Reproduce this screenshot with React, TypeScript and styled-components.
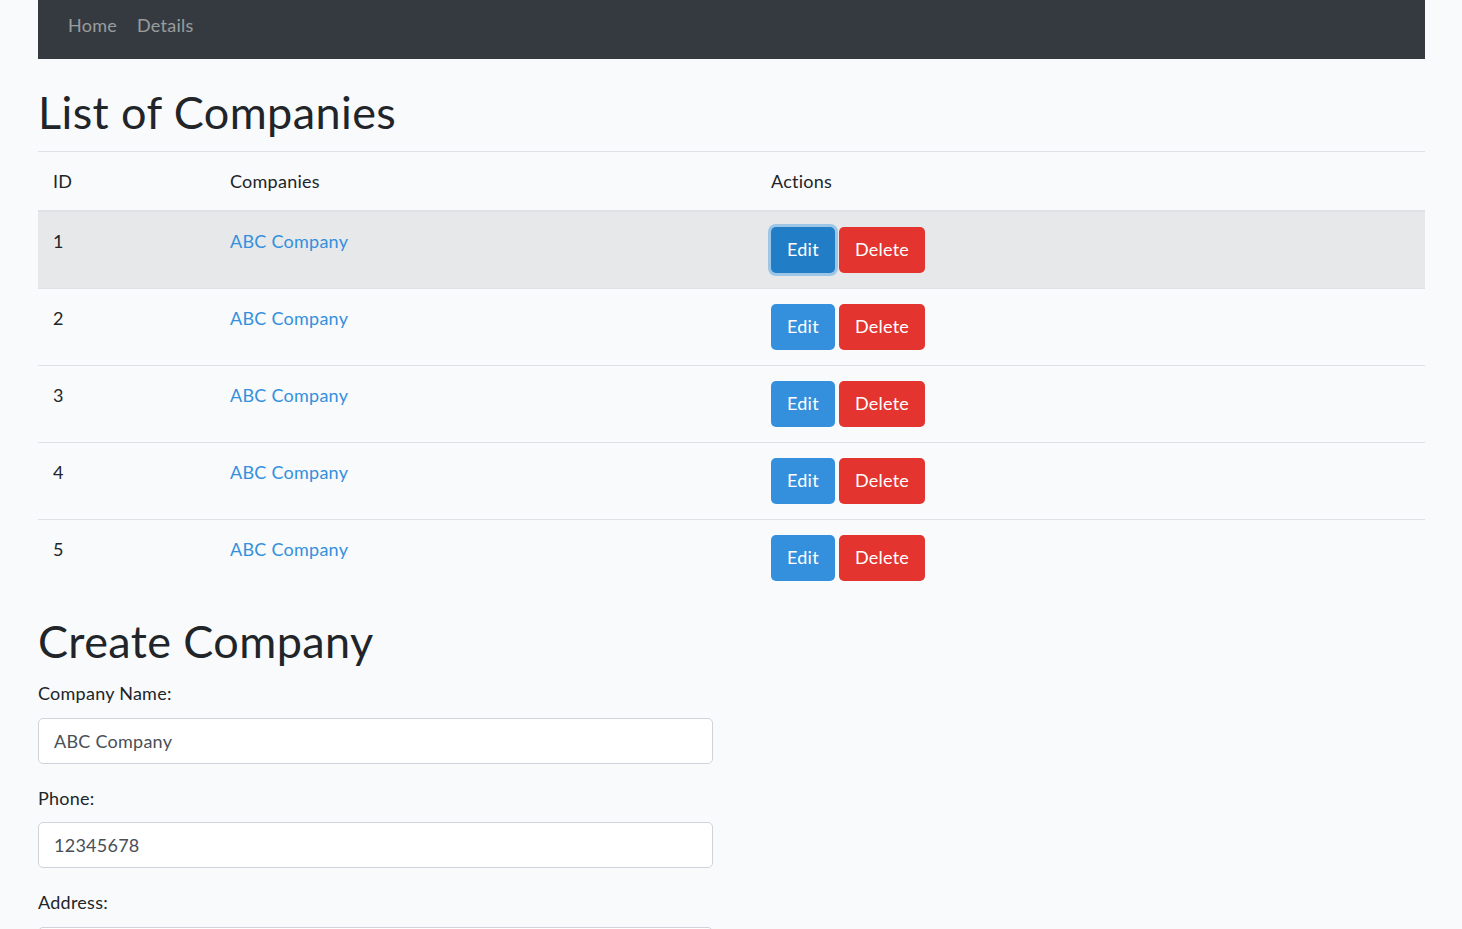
import React from 'react';
import styled, { createGlobalStyle } from 'styled-components';

const GlobalStyle = createGlobalStyle`
  * { box-sizing: border-box; }
  body {
    margin: 0;
    background: #f8fafc;
    color: #212529;
    font-family: Lato, "Noto Sans", sans-serif;
    font-size: 18px;
    line-height: 28.8px;
    letter-spacing: 0.25px;
  }
`;

const Page = styled.div`
  padding: 0 37px 0 38px;
`;

const Navbar = styled.nav`
  height: 59px;
  background: #343a40;
  display: flex;
  align-items: flex-start;
  padding: 11px 20px 0;
`;

const NavLink = styled.a`
  color: rgba(255, 255, 255, 0.5);
  text-decoration: none;
  font-size: 18px;
  padding: 0 10px;
  line-height: 28.8px;
`;

const Heading = styled.h1`
  font-size: 45px;
  font-weight: 400;
  line-height: 54px;
  letter-spacing: 0.4px;
  margin: ${p => (p.$first ? '26px' : '0')} 0 ${p => (p.$first ? '12px' : '11px')};
`;

const Table = styled.table`
  width: 100%;
  border-collapse: collapse;
  margin-bottom: 18px;
`;

const Th = styled.th`
  text-align: left;
  font-weight: 400;
  padding: 15px 15px 14px;
  border-top: 1px solid #dee2e6;
  border-bottom: 2px solid #dee2e6;
  vertical-align: bottom;
`;

const Row = styled.tr`
  background: ${p => (p.$hover ? '#e6e8ea' : 'transparent')};
`;

const Td = styled.td`
  padding: 15px;
  border-top: ${p => (p.$first ? 'none' : '1px solid #dee2e6')};
  vertical-align: top;
`;

const CompanyLink = styled.a`
  color: #3490dc;
  text-decoration: none;
`;

const Actions = styled.div`
  display: flex;
  gap: 4px;
`;

const Button = styled.button`
  font-family: inherit;
  font-size: 18px;
  letter-spacing: 0.25px;
  line-height: 28.8px;
  padding: 7.5px 15px;
  height: 46px;
  border: 1px solid transparent;
  border-radius: 5px;
  color: #fff;
  cursor: pointer;
  background: ${p => (p.$variant === 'danger' ? '#e3342f' : p.$active ? '#227dc7' : '#3490dc')};
  box-shadow: ${p => (p.$active ? '0 0 0 3px rgba(82, 161, 225, 0.5)' : 'none')};
`;

const FormGroup = styled.div`
  margin-bottom: 20px;
  width: 675px;
`;

const Label = styled.label`
  display: block;
  margin-bottom: 10px;
`;

const Input = styled.input`
  display: block;
  width: 100%;
  height: 46px;
  padding: 7.5px 15px;
  font-family: inherit;
  font-size: 18px;
  letter-spacing: 0.25px;
  color: #495057;
  background: #fff;
  border: 1px solid #ced4da;
  border-radius: 5px;
`;

const companies = [1, 2, 3, 4, 5].map(id => ({ id, name: 'ABC Company' }));

export default function App() {
  return (
    <>
      <GlobalStyle />
      <Page>
        <Navbar>
          <NavLink href="#">Home</NavLink>
          <NavLink href="#">Details</NavLink>
        </Navbar>

        <Heading $first>List of Companies</Heading>
        <Table>
          <colgroup>
            <col style={{ width: 177 }} />
            <col style={{ width: 541 }} />
            <col />
          </colgroup>
          <thead>
            <tr>
              <Th>ID</Th>
              <Th>Companies</Th>
              <Th>Actions</Th>
            </tr>
          </thead>
          <tbody>
            {companies.map((c, i) => (
              <Row key={c.id} $hover={i === 0}>
                <Td $first={i === 0}>{c.id}</Td>
                <Td $first={i === 0}>
                  <CompanyLink href="#">{c.name}</CompanyLink>
                </Td>
                <Td $first={i === 0}>
                  <Actions>
                    <Button $active={i === 0}>Edit</Button>
                    <Button $variant="danger">Delete</Button>
                  </Actions>
                </Td>
              </Row>
            ))}
          </tbody>
        </Table>

        <Heading>Create Company</Heading>
        <FormGroup>
          <Label>Company Name:</Label>
          <Input defaultValue="ABC Company" />
        </FormGroup>
        <FormGroup>
          <Label>Phone:</Label>
          <Input defaultValue="12345678" />
        </FormGroup>
        <FormGroup>
          <Label>Address:</Label>
          <Input defaultValue="" />
        </FormGroup>
      </Page>
    </>
  );
}
